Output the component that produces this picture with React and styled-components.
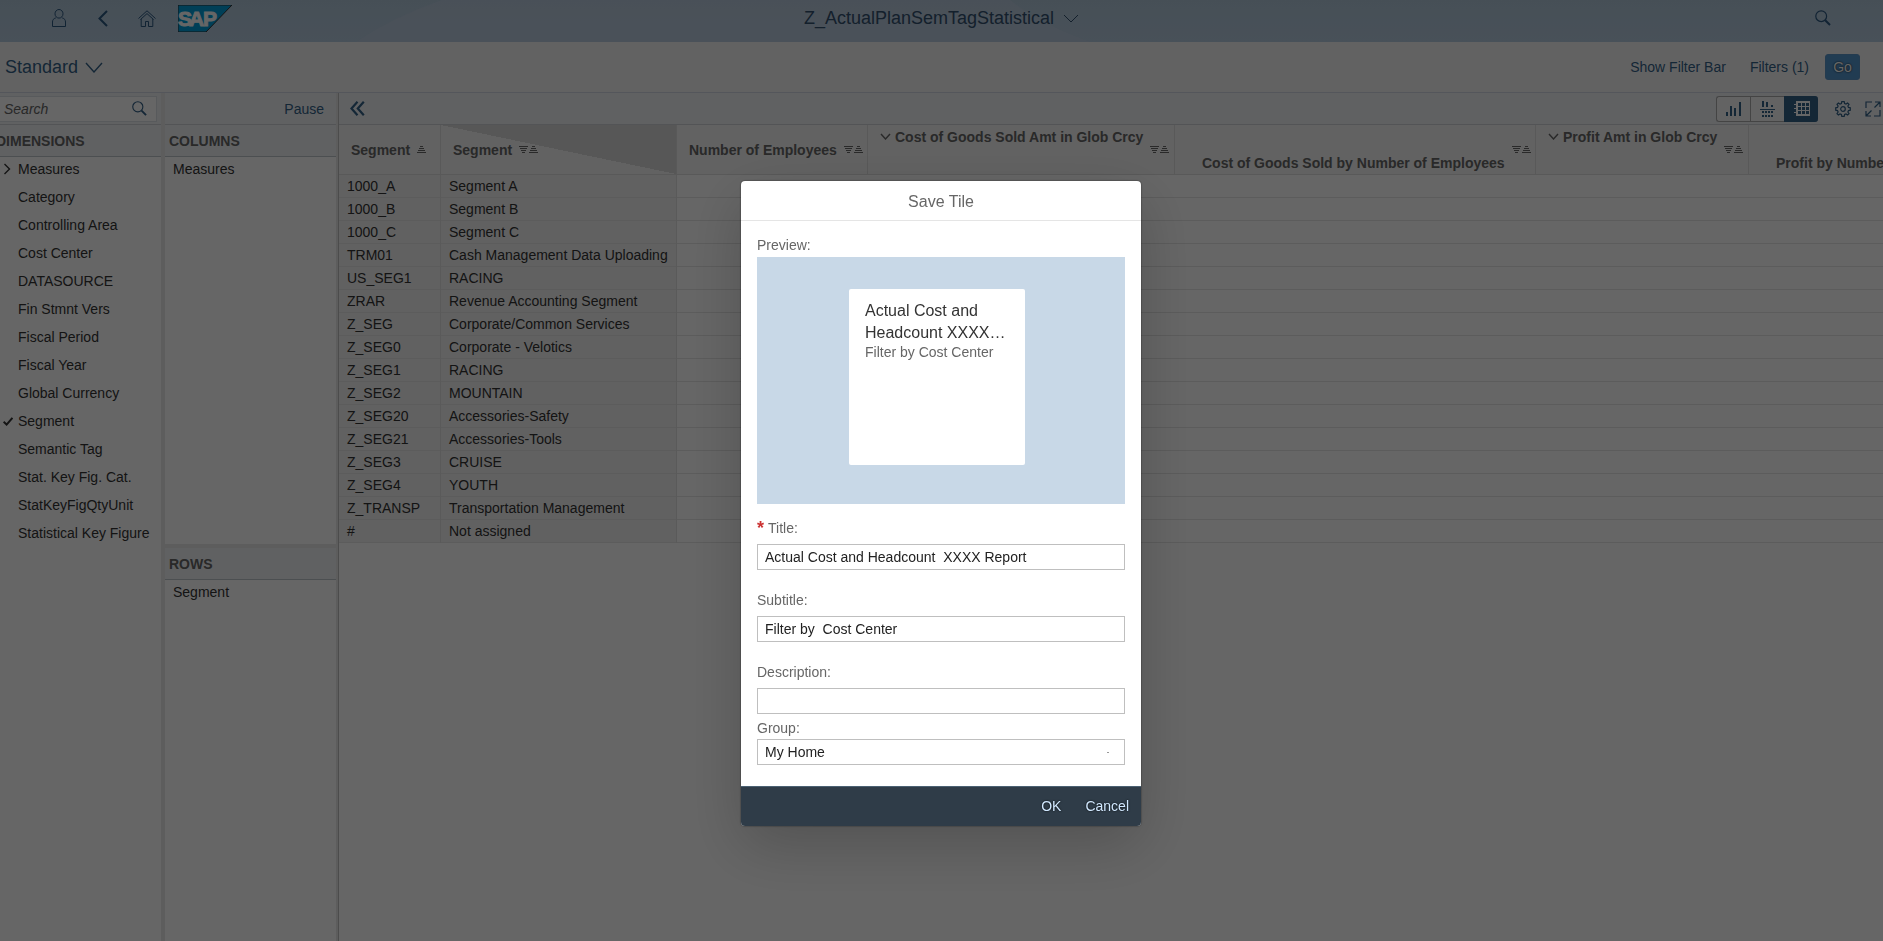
import React from "react";
import styled, { createGlobalStyle, css } from "styled-components";

const Global = createGlobalStyle`
  *, *::before, *::after { box-sizing: border-box; }
  html, body, #root { height: 100%; }
  body {
    margin: 0;
    overflow: hidden;
    background: #fff;
    color: #333;
    font: 14px/20px "Liberation Sans", Arial, sans-serif;
  }
  button, input, select { font: inherit; color: inherit; margin: 0; }
`;

const Page = styled.div`
  display: flex;
  flex-direction: column;
  min-height: 100%;
`;

const Icon = styled.svg.attrs({ fill: "none", stroke: "currentColor", "aria-hidden": true })`
  display: block;
  flex: none;
  width: ${(p) => p.$w}px;
  height: ${(p) => p.$h || p.$w}px;
`;

const PlainButton = styled.button`
  display: flex;
  align-items: center;
  padding: 0;
  border: 0;
  background: none;
  color: #346187;
`;

const ShellBar = styled.header`
  display: grid;
  grid-template-columns: 1fr auto 1fr;
  align-items: center;
  position: relative;
  height: 42px;
  padding: 0 52px 6px;
  background: linear-gradient(#b0c6d8, #b4cade);
`;

const ShellWave = styled.svg`
  position: absolute;
  inset: 0;
  width: 100%;
  height: 100%;
`;

const ShellStart = styled.div`
  display: flex;
  align-items: center;
  position: relative;
`;

const ShellButton = styled(PlainButton)`
  color: #2b5780;
  margin-right: ${(p) => p.$gap || 0}px;
`;

const ShellTitle = styled(PlainButton)`
  position: relative;
  gap: 9px;
  color: #32506f;
  font-size: 18px;
`;

const ShellEnd = styled(ShellStart)`
  justify-content: flex-end;
`;

const FilterBar = styled.div`
  display: flex;
  align-items: center;
  height: 51px;
  padding: 0 23px 0 5px;
  background: #f6f6f6;
  border-bottom: 1px solid #d3d7e4;
`;

const VariantButton = styled(PlainButton)`
  gap: 7px;
  margin-right: auto;
  font-size: 18px;
`;

const LinkButton = styled(PlainButton)`
  margin-right: ${(p) => p.$gap || 0}px;
`;

const GoButton = styled.button`
  width: 35px;
  height: 26px;
  padding: 0;
  border: 1px solid #5b93c6;
  border-radius: 3px;
  background: #5496cd;
  color: #fff;
  text-shadow: 0 0 2px #000;
`;

const Workspace = styled.div`
  display: flex;
  flex: 1;
  background: #e8e8e8;
`;

const Panel = styled.section`
  display: flex;
  flex-direction: column;
  flex: none;
  width: ${(p) => p.$width}px;
  margin-right: ${(p) => p.$gap}px;
`;

const PanelBar = styled.div`
  display: flex;
  align-items: center;
  justify-content: flex-end;
  height: 32px;
  padding-right: ${(p) => p.$right}px;
  background: #eff2f6;
  border-bottom: 1px solid #d0d3d8;
`;

const SearchBox = styled.label`
  display: flex;
  align-items: center;
  flex: 1;
  min-width: 0;
  height: 26px;
  padding: 0 9px 0 4px;
  border: 1px solid #dde1e6;
  border-left: 0;
  background: #fff;
  color: #346187;
`;

const SearchInput = styled.input`
  flex: 1;
  min-width: 0;
  padding: 0;
  border: 0;
  outline: 0;
  background: none;
  &::placeholder {
    color: #666;
    font-style: italic;
    opacity: 1;
  }
`;

const PanelHeading = styled.h2`
  height: 32px;
  margin: ${(p) => p.$top || 0}px 0 0;
  padding-left: 4px;
  border-bottom: 1px solid #bfc5cb;
  background: #eff2f6;
  color: #666;
  font-size: 14px;
  line-height: 33px;
  overflow: hidden;
`;

const ClippedText = styled.span`
  display: block;
  margin-left: -8px;
`;

const ItemList = styled.ul`
  flex: ${(p) => (p.$height ? "none" : 1)};
  height: ${(p) => (p.$height ? `${p.$height}px` : "auto")};
  margin: 0;
  padding: 0;
  list-style: none;
  background: #fff;
`;

const Item = styled.li`
  display: flex;
  align-items: center;
  height: 28px;
  padding-bottom: 4px;
  padding-left: ${(p) => p.$indent || 0}px;
`;

const ItemMark = styled.span`
  display: flex;
  width: 18px;
  padding-left: 3px;
`;

const Grid = styled.main`
  flex: 1;
  min-width: 0;
  overflow: hidden;
  border-left: 1px solid #bfbfbf;
  background: #fff;
`;

const GridBar = styled.div`
  display: flex;
  align-items: center;
  height: 32px;
  padding: 0 2px 0 11px;
  background: #eff2f6;
  border-bottom: 1px solid #d0d3d8;
`;

const Segmented = styled.div`
  display: flex;
  margin-left: auto;
  margin-right: 17px;
`;

const SegmentButton = styled.button`
  display: flex;
  align-items: center;
  justify-content: center;
  width: 34px;
  height: 26px;
  padding: 0;
  border: 1px solid #ababab;
  border-right-width: 0;
  background: #f7f7f7;
  color: #346187;
  &:first-child { border-radius: 3px 0 0 3px; }
  &:last-child { border-radius: 0 3px 3px 0; }
  ${(p) =>
    p.$on &&
    css`
      border-color: #346187;
      background: #346187;
      color: #fff;
    `}
`;

const Table = styled.table`
  width: 1744px;
  table-layout: fixed;
  border-collapse: separate;
  border-spacing: 0;
`;

const HeadCell = styled.th`
  height: 50px;
  padding: 0 5px 0 12px;
  border-right: 1px solid #dedede;
  border-bottom: 1px solid #dedede;
  background: ${(p) =>
    p.$corner ? "linear-gradient(to top right, #f5f5f5 50%, #d9d9d9 50%)" : "#f5f5f5"};
  color: #666;
  font-weight: bold;
  text-align: left;
  white-space: nowrap;
`;

const HeadInner = styled.div`
  display: flex;
  align-items: center;
  height: 48px;
  gap: 7px;
`;

const HeadText = styled.span`
  display: flex;
  align-items: center;
  gap: 4px;
  align-self: ${(p) => p.$align || "center"};
  margin-left: ${(p) => p.$left || 0}px;
  padding: ${(p) => (p.$align ? 1 : 0)}px 0;
`;

const Cell = styled.td`
  height: 23px;
  padding: 0 8px;
  border-right: 1px solid ${(p) => (p.$key ? "#e0e0e0" : "transparent")};
  border-bottom: 1px solid #e5e5e5;
  background: ${(p) => (p.$key ? "#f2f2f2" : "#fff")};
  white-space: nowrap;
`;

const Backdrop = styled.div`
  position: fixed;
  inset: 0;
  display: flex;
  align-items: flex-start;
  justify-content: center;
  padding-top: 181px;
  background: rgba(0, 0, 0, 0.6);
`;

const Dialog = styled.form`
  width: 400px;
  margin-right: 1px;
  border-radius: 4px;
  overflow: hidden;
  background: #fff;
  color: #666;
  box-shadow: 0 0 2px rgba(0, 0, 0, 0.6), 0 20px 60px rgba(0, 0, 0, 0.2);
`;

const DialogTitle = styled.h1`
  height: 40px;
  margin: 0;
  border-bottom: 1px solid #e5e5e5;
  font-size: 16px;
  font-weight: normal;
  line-height: 42px;
  text-align: center;
`;

const DialogBody = styled.div`
  display: flex;
  flex-direction: column;
  padding: 14px 16px 21px;
`;

const PreviewLabel = styled.div`
  height: 22px;
`;

const Preview = styled.div`
  height: 247px;
  padding: 32px 92px;
  background: #c8d8e7;
`;

const Tile = styled.div`
  width: 176px;
  height: 176px;
  padding: 11px 16px;
  border-radius: 2px;
  background: #fff;
`;

const TileTitle = styled.div`
  color: #333;
  font-size: 16px;
  line-height: 22px;
`;

const TileSubtitle = styled.div`
  font-size: 14px;
  line-height: 16px;
`;

const Field = styled.div`
  display: flex;
  flex-direction: column;
  gap: ${(p) => (p.$tight ? 1 : 6)}px;
  margin-top: ${(p) => p.$top}px;
`;

const FieldLabel = styled.label`
  display: flex;
  align-items: center;
  gap: 4px;
  height: 20px;
`;

const Required = styled.span`
  color: #c33;
  font-size: 18px;
  font-weight: bold;
  line-height: 18px;
`;

const inputStyle = css`
  width: 100%;
  height: 26px;
  padding: 0 7px;
  border: 1px solid #bfbfbf;
  border-radius: 0;
  outline: 0;
  background: #fff;
  color: #222;
`;

const TextInput = styled.input`
  ${inputStyle}
`;

const SelectBox = styled.div`
  display: grid;
  align-items: center;
  & > * { grid-area: 1 / 1; }
`;

const Select = styled.select`
  ${inputStyle}
  appearance: none;
`;

const SelectDot = styled.span`
  justify-self: end;
  width: 2px;
  height: 1px;
  margin-right: 16px;
  background: #999;
`;

const DialogFooter = styled.footer`
  display: flex;
  align-items: center;
  justify-content: flex-end;
  gap: 24px;
  height: 40px;
  padding: 0 12px 2px 0;
  border-top: 1px solid #4b6173;
  background: #2f3c48;
`;

const FooterButton = styled.button`
  padding: 0;
  border: 0;
  background: none;
  color: #d1e8ff;
  text-shadow: 0 0 2px #000;
`;

const ChevronDown = ({ w, h, sw = 1 }) => (
  <Icon $w={w} $h={h} viewBox={`0 0 ${w} ${h}`} strokeWidth={sw}>
    <path d={`M1 1 L${w / 2} ${h - 1} L${w - 1} 1`} />
  </Icon>
);

const SearchIcon = ({ size = 16 }) => (
  <Icon $w={size} viewBox="0 0 16 16" strokeWidth="1.2">
    <circle cx="6.2" cy="6.2" r="5.4" />
    <path d="M10.2 10.2 L15 15" strokeWidth="2" />
  </Icon>
);

const SortIcon = ({ up }) => (
  <Icon $w={up ? 9 : 19} $h={8} viewBox={up ? "10 0 9 8" : "0 0 19 8"} strokeWidth="1" shapeRendering="crispEdges">
    {!up && <path d="M0 .5H9M1 2.5H8M2 4.5H7M3 6.5H6" />}
    <path d="M13 .5H16M12 2.5H17M11 4.5H18M10 6.5H19" />
  </Icon>
);

const SapLogo = () => (
  <Icon $w={54} $h={27} viewBox="0 0 54 27" stroke="none">
    <path d="M0 0H54L28 27H0Z" fill="#009fd9" />
    <text
      x="0 11 25" y="21" fill="#fff" fontFamily="Liberation Sans, Arial, sans-serif"
      fontSize="21" fontWeight="bold" stroke="#fff" strokeWidth="1"
    >
      SAP
    </text>
  </Icon>
);

const dimensions = [
  "Measures", "Category", "Controlling Area", "Cost Center", "DATASOURCE", "Fin Stmnt Vers",
  "Fiscal Period", "Fiscal Year", "Global Currency", "Segment", "Semantic Tag",
  "Stat. Key Fig. Cat.", "StatKeyFigQtyUnit", "Statistical Key Figure",
];

const segments = [
  ["1000_A", "Segment A"],
  ["1000_B", "Segment B"],
  ["1000_C", "Segment C"],
  ["TRM01", "Cash Management Data Uploading"],
  ["US_SEG1", "RACING"],
  ["ZRAR", "Revenue Accounting Segment"],
  ["Z_SEG", "Corporate/Common Services"],
  ["Z_SEG0", "Corporate - Velotics"],
  ["Z_SEG1", "RACING"],
  ["Z_SEG2", "MOUNTAIN"],
  ["Z_SEG20", "Accessories-Safety"],
  ["Z_SEG21", "Accessories-Tools"],
  ["Z_SEG3", "CRUISE"],
  ["Z_SEG4", "YOUTH"],
  ["Z_TRANSP", "Transportation Management"],
  ["#", "Not assigned"],
];

const columns = [
  { text: "Segment", width: 102, up: true },
  { text: "Segment", width: 236, corner: true },
  { text: "Number of Employees", width: 191 },
  { text: "Cost of Goods Sold Amt in Glob Crcy", width: 307, align: "flex-start", chevron: true },
  { text: "Cost of Goods Sold by Number of Employees", width: 361, align: "flex-end", left: 15 },
  { text: "Profit Amt in Glob Crcy", width: 213, align: "flex-start", chevron: true },
  { text: "Profit by Number of Employees", width: 334, align: "flex-end", left: 15 },
];

export default function App() {
  return (
    <>
      <Global />
      <Page>
        <ShellBar>
          <ShellWave viewBox="0 0 1883 42" preserveAspectRatio="none" aria-hidden="true">
            <path d="M356 42 Q395 16 442 0 H1010 Q1040 24 1090 42Z" fill="#bccbdf" opacity=".6" />
          </ShellWave>
          <ShellStart>
            <ShellButton aria-label="User" $gap={32}>
              <Icon $w={14} $h={18} viewBox="0 0 14 18" strokeWidth="1">
                <ellipse cx="7" cy="4.8" rx="4" ry="4.3" />
                <path d="M3.8 8.9C1.4 9.6.5 11 .5 13V17.5H13.5V13C13.5 11 12.6 9.6 10.2 8.9" />
              </Icon>
            </ShellButton>
            <ShellButton aria-label="Back" $gap={30}>
              <Icon $w={10} $h={17} viewBox="0 0 10 17" strokeWidth="2">
                <path d="M9 1 L1.5 8.5 L9 16" />
              </Icon>
            </ShellButton>
            <ShellButton aria-label="Home" $gap={22}>
              <Icon $w={18} $h={17} viewBox="0 0 18 17" strokeWidth="1">
                <path d="M.5 8.5 L9 .8 L17.5 8.5M2.5 9.5 L9 3.6 L15.5 9.5M3.2 9V16.5H7.5V11.5H10.5V16.5H14.8V9" />
              </Icon>
            </ShellButton>
            <SapLogo />
          </ShellStart>
          <ShellTitle>
            Z_ActualPlanSemTagStatistical
            <ChevronDown w={16} h={9} />
          </ShellTitle>
          <ShellEnd>
            <ShellButton aria-label="Search"><SearchIcon /></ShellButton>
          </ShellEnd>
        </ShellBar>

        <FilterBar>
          <VariantButton>
            Standard
            <ChevronDown w={18} h={11} sw={1.4} />
          </VariantButton>
          <LinkButton $gap={24}>Show Filter Bar</LinkButton>
          <LinkButton $gap={16}>Filters (1)</LinkButton>
          <GoButton>Go</GoButton>
        </FilterBar>

        <Workspace>
          <Panel $width={161} $gap={4}>
            <PanelBar $right={4}>
              <SearchBox>
                <SearchInput aria-label="Search" placeholder="Search" />
                <SearchIcon size={15} />
              </SearchBox>
            </PanelBar>
            <PanelHeading><ClippedText>DIMENSIONS</ClippedText></PanelHeading>
            <ItemList>
              {dimensions.map((name) => (
                <Item key={name}>
                  <ItemMark>
                    {name === "Measures" && (
                      <Icon $w={8} $h={12} viewBox="0 0 8 12" strokeWidth="1.4"><path d="M1.5 1 L6.5 6 L1.5 11" /></Icon>
                    )}
                    {name === "Segment" && (
                      <Icon $w={10} $h={9} viewBox="0 0 10 9" strokeWidth="2"><path d="M.6 4.8 L3.6 7.6 L9.4 .8" /></Icon>
                    )}
                  </ItemMark>
                  {name}
                </Item>
              ))}
            </ItemList>
          </Panel>

          <Panel $width={171} $gap={2}>
            <PanelBar $right={12}>
              <LinkButton>Pause</LinkButton>
            </PanelBar>
            <PanelHeading>COLUMNS</PanelHeading>
            <ItemList $height={387}><Item $indent={8}>Measures</Item></ItemList>
            <PanelHeading $top={4}>ROWS</PanelHeading>
            <ItemList><Item $indent={8}>Segment</Item></ItemList>
          </Panel>

          <Grid>
            <GridBar>
              <PlainButton aria-label="Collapse panels">
                <Icon $w={15} $h={15} viewBox="0 0 15 15" strokeWidth="2.2"><path d="M7.5 .8 L1.5 7.5 L7.5 14.2M13.8 .8 L7.8 7.5 L13.8 14.2" /></Icon>
              </PlainButton>
              <Segmented>
                <SegmentButton aria-label="Chart">
                  <Icon $w={15} $h={15} viewBox="0 0 15 15" strokeWidth="2" shapeRendering="crispEdges"><path d="M1 15V11M5 15V5M9 15V7M14 15V1" /></Icon>
                </SegmentButton>
                <SegmentButton aria-label="Chart and table">
                  <Icon $w={15} $h={16} viewBox="0 0 15 16" strokeWidth="2" shapeRendering="crispEdges">
                    <path d="M3 0V6M7 1V6M12 4V6" />
                    <path d="M0 8.5H15" strokeWidth="1" />
                    <path d="M2 11H14M2 15H14" strokeDasharray="2 1" />
                  </Icon>
                </SegmentButton>
                <SegmentButton aria-label="Table" $on>
                  <Icon $w={16} $h={15} viewBox="0 0 16 15" strokeWidth="1" shapeRendering="crispEdges">
                    <path d="M2.5 .5H15.5V14.5H2.5ZM2 1.5H15M2 5.5H15M2 9.5H15M3.5 1V14M7.5 1V14M11.5 1V14M0 3.5H3M0 7.5H3M0 11.5H3M2 13.5H15" />
                  </Icon>
                </SegmentButton>
              </Segmented>
              <LinkButton aria-label="Settings" $gap={14}>
                <Icon $w={16} viewBox="0 0 16 16" strokeWidth="1.2">
                  <circle cx="8" cy="8" r="2.3" />
                  <path d="M6.8 .7H9.2L9.6 2.5L11 3.1L12.6 2L14 3.4L12.9 5L13.5 6.4L15.3 6.8V9.2L13.5 9.6L12.9 11L14 12.6L12.6 14L11 12.9L9.6 13.5L9.2 15.3H6.8L6.4 13.5L5 12.9L3.4 14L2 12.6L3.1 11L2.5 9.6L.7 9.2V6.8L2.5 6.4L3.1 5L2 3.4L3.4 2L5 3.1L6.4 2.5Z" />
                </Icon>
              </LinkButton>
              <PlainButton aria-label="Full screen">
                <Icon $w={16} viewBox="0 0 16 16" strokeWidth="1.2">
                  <path d="M7 1H1V7M9 15H15V9M10 1H15V6M15 1L9.5 6.5M6 15H1V10M1 15L6.5 9.5" />
                </Icon>
              </PlainButton>
            </GridBar>
            <Table>
              <colgroup>
                {columns.map((c, i) => <col key={i} width={c.width} />)}
              </colgroup>
              <thead>
                <tr>
                  {columns.map((c, i) => (
                    <HeadCell key={i} $corner={c.corner} scope="col">
                      <HeadInner>
                        <HeadText $align={c.align} $left={c.left}>
                          {c.chevron && <ChevronDown w={11} h={7} sw={1.4} />}
                          {c.text}
                        </HeadText>
                        <SortIcon up={c.up} />
                      </HeadInner>
                    </HeadCell>
                  ))}
                </tr>
              </thead>
              <tbody>
                {segments.map(([id, name]) => (
                  <tr key={id}>
                    <Cell $key>{id}</Cell>
                    <Cell $key>{name}</Cell>
                    <Cell colSpan={5} />
                  </tr>
                ))}
              </tbody>
            </Table>
          </Grid>
        </Workspace>
      </Page>

      <Backdrop>
        <Dialog role="dialog" aria-labelledby="dialog-title" onSubmit={(e) => e.preventDefault()}>
          <DialogTitle id="dialog-title">Save Tile</DialogTitle>
          <DialogBody>
            <PreviewLabel>Preview:</PreviewLabel>
            <Preview>
              <Tile>
                <TileTitle>Actual Cost and Headcount XXXX…</TileTitle>
                <TileSubtitle>Filter by Cost Center</TileSubtitle>
              </Tile>
            </Preview>
            <Field $top={14}>
              <FieldLabel htmlFor="title"><Required>*</Required>Title:</FieldLabel>
              <TextInput id="title" defaultValue="Actual Cost and Headcount  XXXX Report" />
            </Field>
            <Field $top={20}>
              <FieldLabel htmlFor="subtitle">Subtitle:</FieldLabel>
              <TextInput id="subtitle" defaultValue="Filter by  Cost Center" />
            </Field>
            <Field $top={20}>
              <FieldLabel htmlFor="description">Description:</FieldLabel>
              <TextInput id="description" />
            </Field>
            <Field $top={4} $tight>
              <FieldLabel htmlFor="group">Group:</FieldLabel>
              <SelectBox>
                <Select id="group"><option>My Home</option></Select>
                <SelectDot />
              </SelectBox>
            </Field>
          </DialogBody>
          <DialogFooter>
            <FooterButton type="submit">OK</FooterButton>
            <FooterButton type="button">Cancel</FooterButton>
          </DialogFooter>
        </Dialog>
      </Backdrop>
    </>
  );
}
